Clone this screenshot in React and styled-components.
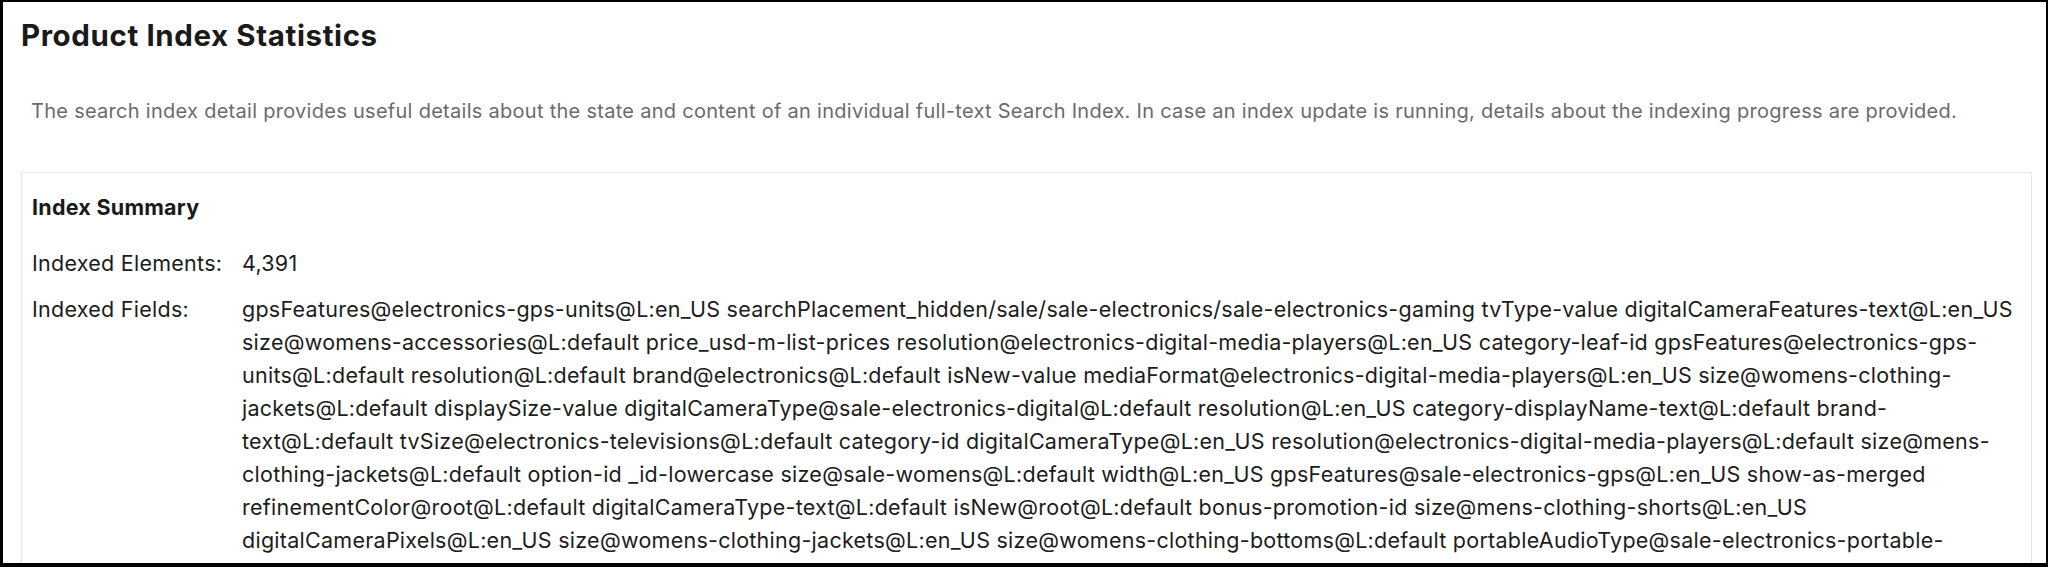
import React from "react";
import styled, { createGlobalStyle } from "styled-components";

const GlobalStyle = createGlobalStyle`
  html, body {
    margin: 0;
    padding: 0;
    background: #ffffff;
  }
  body {
    font-family: Inter, "Noto Sans", "Liberation Sans", sans-serif;
    -webkit-font-smoothing: antialiased;
  }
`;

const Frame = styled.div`
  box-sizing: border-box;
  width: 2048px;
  height: 567px;
  overflow: hidden;
  background: #ffffff;
  border-style: solid;
  border-color: #000000;
  border-width: 2px 2px 4px 3px;
  padding: 0 14px 0 18px;
  display: flex;
  flex-direction: column;
`;

const Title = styled.h1`
  margin: 16px 0 0 0;
  font-size: 29.5px;
  line-height: 34px;
  font-weight: 700;
  color: #1a1a1a;
  letter-spacing: 0.6px;
`;

const Description = styled.p`
  margin: 44px 0 0 0;
  padding: 0 10px;
  font-size: 20px;
  line-height: 30px;
  letter-spacing: 0.28px;
  color: #6b6b6b;
  white-space: nowrap;
`;

const Card = styled.section`
  box-sizing: border-box;
  flex-shrink: 0;
  margin-top: 46px;
  border: 1px solid #e4e4e4;
  padding: 18px 10px 10px;
`;

const CardHeading = styled.h2`
  margin: 0 0 23px 0;
  font-size: 21.5px;
  line-height: 33px;
  letter-spacing: 0.25px;
  font-weight: 700;
  color: #1a1a1a;
`;

const StatGrid = styled.dl`
  margin: 0;
  display: grid;
  grid-template-columns: 210px 1fr;
  row-gap: 13px;
  font-size: 21.5px;
  line-height: 33px;
  letter-spacing: 0.26px;
  color: #1c1c1c;
`;

const StatLabel = styled.dt`
  margin: 0;
`;

const StatValue = styled.dd`
  margin: 0;
  min-width: 0;
`;

const indexedFields = [
  "gpsFeatures@electronics-gps-units@L:en_US",
  "searchPlacement_hidden/sale/sale-electronics/sale-electronics-gaming",
  "tvType-value",
  "digitalCameraFeatures-text@L:en_US",
  "size@womens-accessories@L:default",
  "price_usd-m-list-prices",
  "resolution@electronics-digital-media-players@L:en_US",
  "category-leaf-id",
  "gpsFeatures@electronics-gps-units@L:default",
  "resolution@L:default",
  "brand@electronics@L:default",
  "isNew-value",
  "mediaFormat@electronics-digital-media-players@L:en_US",
  "size@womens-clothing-jackets@L:default",
  "displaySize-value",
  "digitalCameraType@sale-electronics-digital@L:default",
  "resolution@L:en_US",
  "category-displayName-text@L:default",
  "brand-text@L:default",
  "tvSize@electronics-televisions@L:default",
  "category-id",
  "digitalCameraType@L:en_US",
  "resolution@electronics-digital-media-players@L:default",
  "size@mens-clothing-jackets@L:default",
  "option-id",
  "_id-lowercase",
  "size@sale-womens@L:default",
  "width@L:en_US",
  "gpsFeatures@sale-electronics-gps@L:en_US",
  "show-as-merged",
  "refinementColor@root@L:default",
  "digitalCameraType-text@L:default",
  "isNew@root@L:default",
  "bonus-promotion-id",
  "size@mens-clothing-shorts@L:en_US",
  "digitalCameraPixels@L:en_US",
  "size@womens-clothing-jackets@L:en_US",
  "size@womens-clothing-bottoms@L:default",
  "portableAudioType@sale-electronics-portable-audio@L:default",
  "tvType@electronics-televisions@L:en_US",
  "category-displayName-text@L:en_US",
  "size@mens-accessories@L:default",
];

const stats = [
  { label: "Indexed Elements:", value: "4,391" },
  { label: "Indexed Fields:", value: indexedFields.join(" ") },
];

export default function App() {
  return (
    <>
      <GlobalStyle />
      <Frame>
        <Title>Product Index Statistics</Title>
        <Description>
          The search index detail provides useful details about the state and
          content of an individual full-text Search Index. In case an index
          update is running, details about the indexing progress are provided.
        </Description>
        <Card>
          <CardHeading>Index Summary</CardHeading>
          <StatGrid>
            {stats.map((s) => (
              <React.Fragment key={s.label}>
                <StatLabel>{s.label}</StatLabel>
                <StatValue>{s.value}</StatValue>
              </React.Fragment>
            ))}
          </StatGrid>
        </Card>
      </Frame>
    </>
  );
}
